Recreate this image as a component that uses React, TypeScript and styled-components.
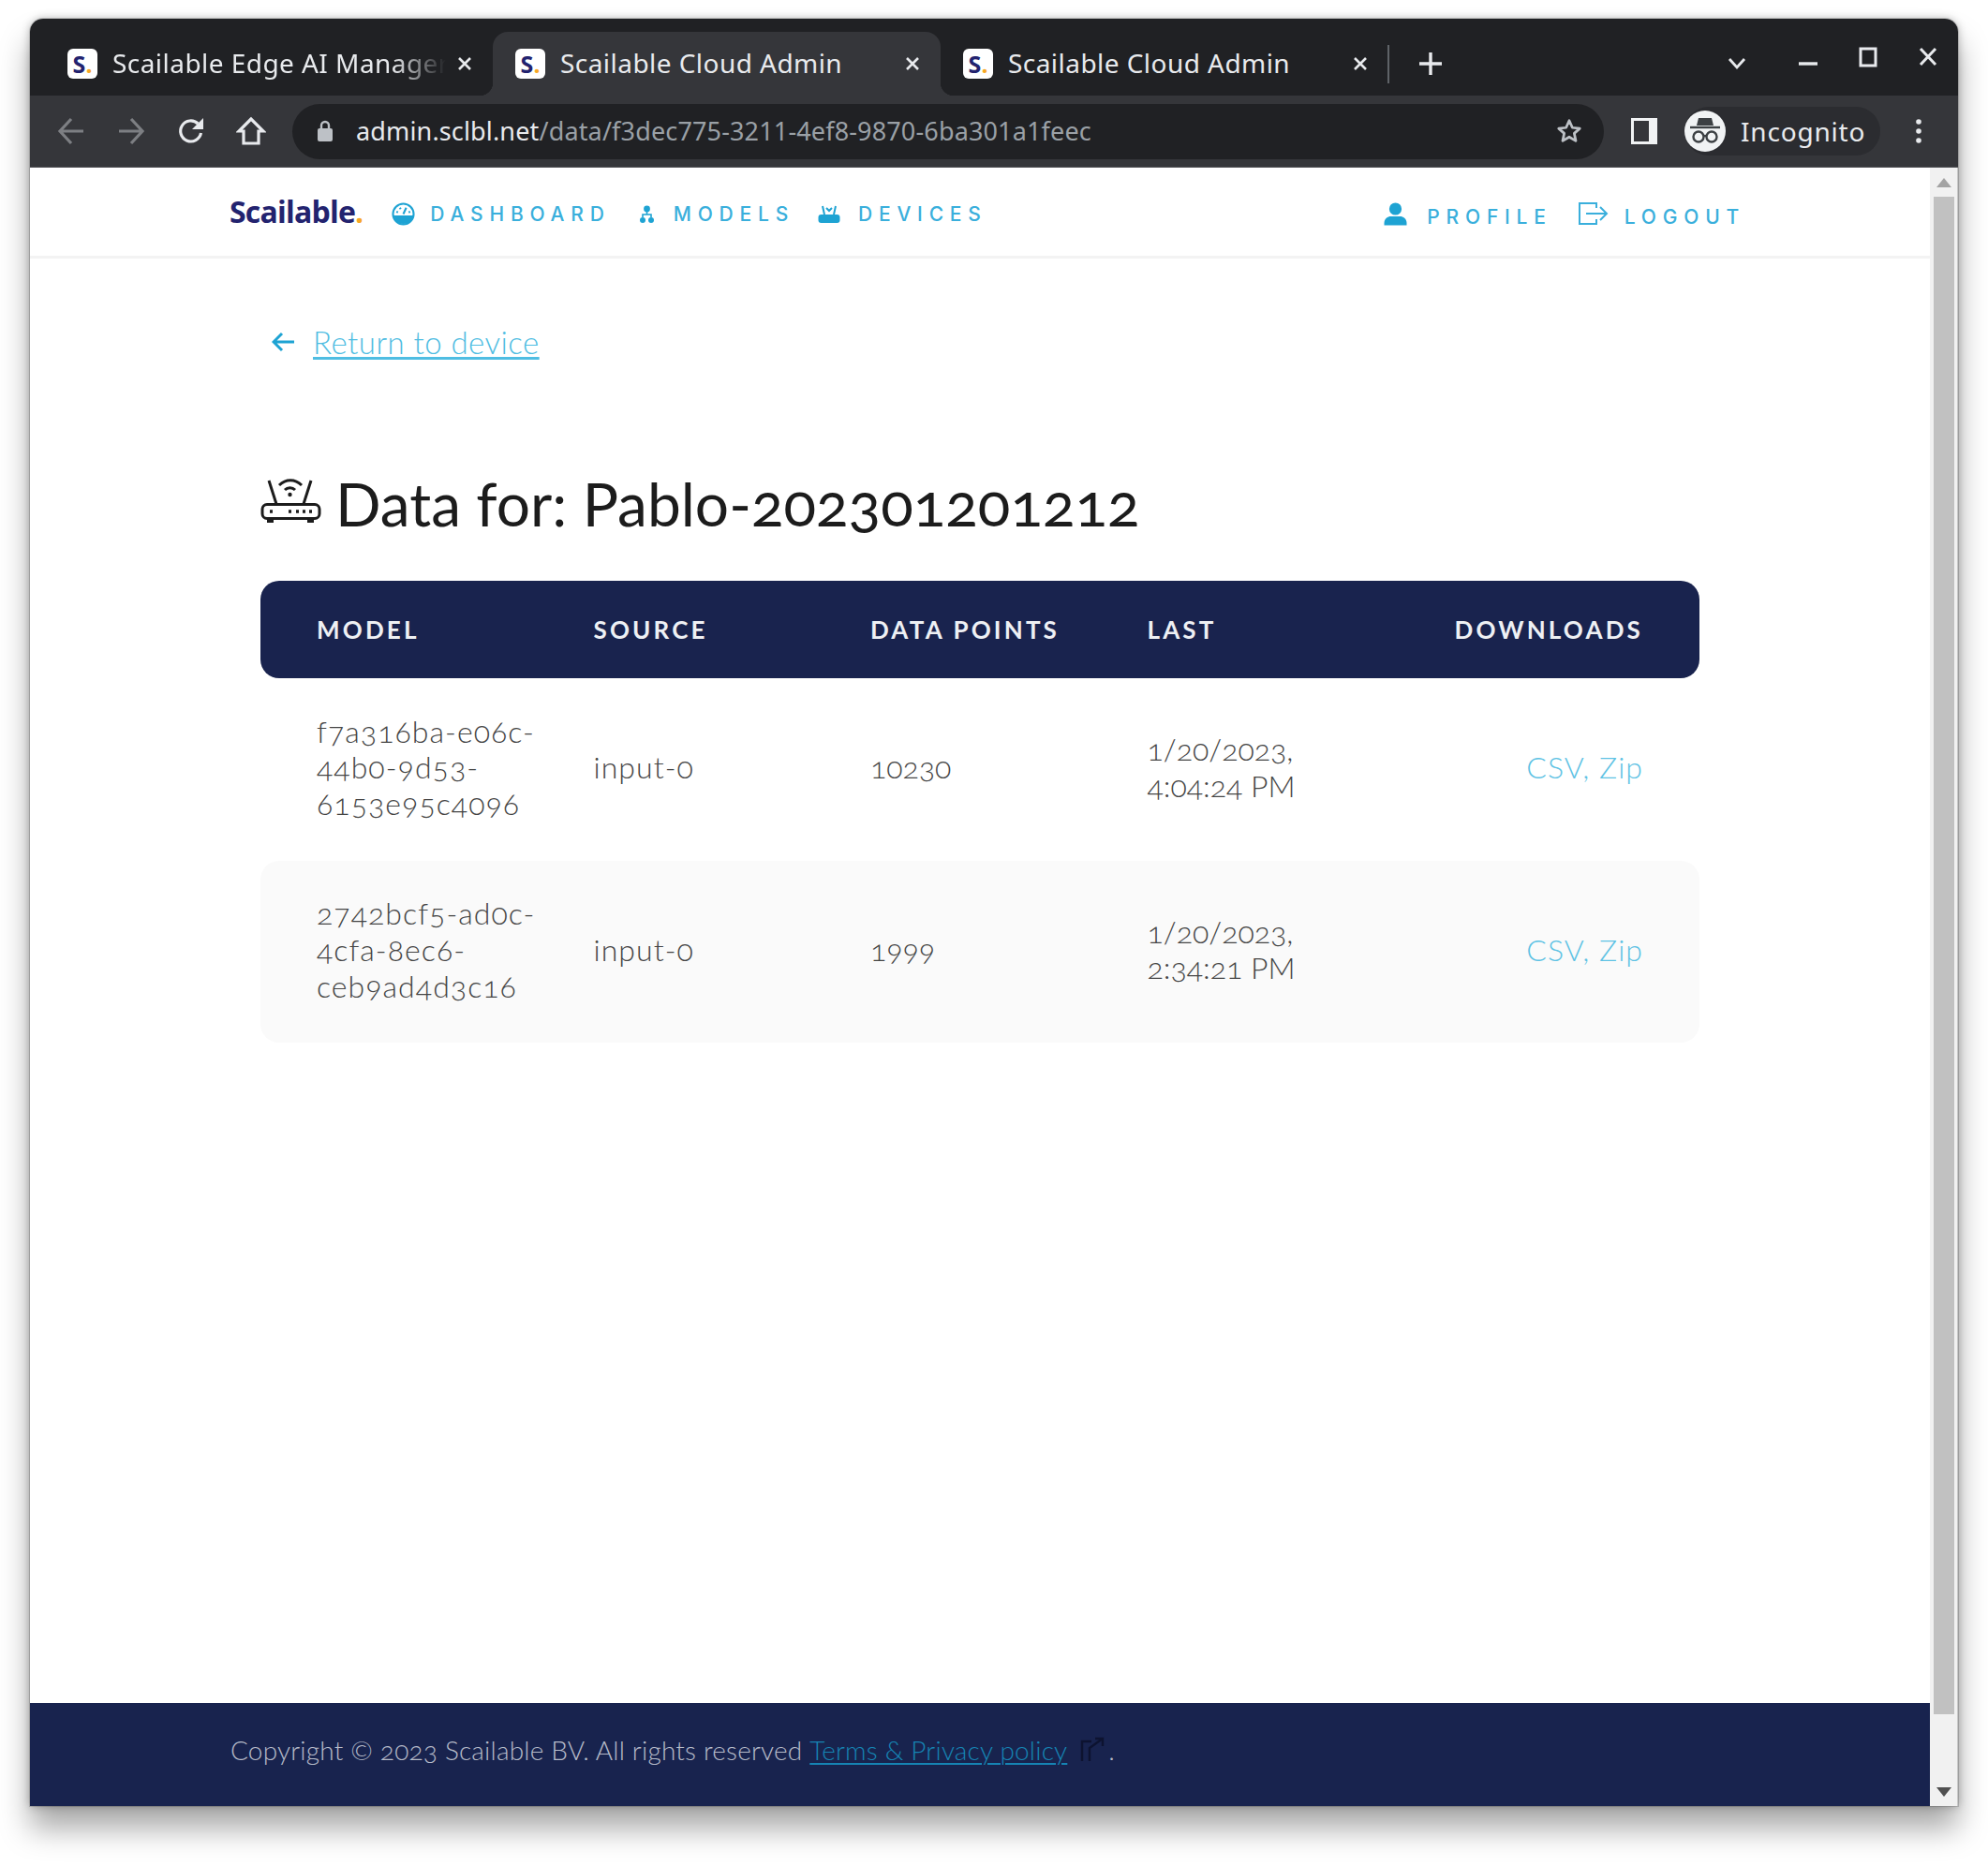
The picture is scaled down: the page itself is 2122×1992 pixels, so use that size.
import React from "react";
import styled, { createGlobalStyle } from "styled-components";

const BODY = `Lato, "Open Sans", sans-serif`;
const CHROME = `"Noto Sans", "Open Sans", sans-serif`;
const NAV = `Inter, "Open Sans", sans-serif`;
const NAVY = "#19234e";

const Global = createGlobalStyle`
  html, body { margin: 0; padding: 0; background: #fff; }
  * { box-sizing: border-box; }
`;

const Desktop = styled.div`
  width: 2122px;
  height: 1992px;
  padding: 20px 32px 64px;
  background: #fff;
  overflow: hidden;
`;
const Window = styled.div`
  width: 2058px;
  height: 1908px;
  display: flex;
  flex-direction: column;
  border-radius: 14px 14px 0 0;
  background: #fff;
  box-shadow: 0 24px 32px rgba(0,0,0,.34), 0 0 10px rgba(0,0,0,.28), 0 0 0 1px rgba(0,0,0,.14);
`;
const TabStrip = styled.div`
  height: 82px;
  flex: none;
  display: flex;
  align-items: flex-end;
  padding-left: 16px;
  background: #202124;
  border-radius: 14px 14px 0 0;
`;
const Tab = styled.div<{ $active?: boolean }>`
  position: relative;
  width: 478px;
  height: 68px;
  flex: none;
  display: flex;
  align-items: center;
  padding: 0 22px 0 24px;
  background: ${(p) => (p.$active ? "#35363a" : "transparent")};
  border-radius: 16px 16px 0 0;
  ${(p) =>
    p.$active
      ? `
    &::before, &::after {
      content: "";
      position: absolute;
      bottom: 0;
      width: 14px;
      height: 14px;
    }
    &::before { left: -14px; background: radial-gradient(circle at 0 0, #202124 14px, #35363a 14.5px); }
    &::after { right: -14px; background: radial-gradient(circle at 100% 0, #202124 14px, #35363a 14.5px); }
  `
      : ""}
`;
const Favicon = styled.div`
  width: 32px;
  height: 32px;
  flex: none;
  display: flex;
  align-items: center;
  justify-content: center;
  background: #fff;
  border-radius: 6px;
  font: 700 25px/32px ${CHROME};
  color: #23236f;
  span { color: #f7a823; }
`;
const TabTitle = styled.div<{ $fade?: boolean }>`
  flex: 1;
  margin: -2px 0 0 16px;
  overflow: hidden;
  white-space: nowrap;
  font: 400 28px/36px ${CHROME};
  letter-spacing: 0.45px;
  color: #e8eaed;
  ${(p) => (p.$fade ? "mask-image: linear-gradient(90deg,#000 84%,transparent 100%);" : "")}
`;
const TabClose = styled.svg`
  width: 16px;
  height: 16px;
  flex: none;
  margin-left: 12px;
  stroke: #e8eaed;
  stroke-width: 2.6;
`;
const TabDivider = styled.div`
  width: 2px;
  height: 41px;
  margin: 0 0 13px -1px;
  flex: none;
  background: #5f6368;
`;
const StripButton = styled.div<{ $w?: number }>`
  width: ${(p) => p.$w ?? 64}px;
  height: 68px;
  flex: none;
  display: flex;
  align-items: center;
  justify-content: center;
`;
const NewTab = styled(StripButton)`
  margin-left: 12px;
`;
const WindowControls = styled.div`
  margin-left: auto;
  display: flex;
  align-items: flex-end;
`;
const ChevronSlot = styled(StripButton)`
  margin-right: 12px;
`;
const Toolbar = styled.div`
  height: 77px;
  flex: none;
  display: flex;
  align-items: center;
  padding-left: 12px;
  background: #35363a;
  border-bottom: 1px solid #55565a;
`;
const ToolButton = styled.div`
  width: 64px;
  height: 64px;
  flex: none;
  display: flex;
  align-items: center;
  justify-content: center;
`;
const AddressBar = styled.div`
  width: 1400px;
  height: 59px;
  margin-left: 12px;
  flex: none;
  display: flex;
  align-items: center;
  padding: 0 22px 0 26px;
  background: #202124;
  border-radius: 30px;
`;
const Url = styled.div`
  flex: 1;
  margin-left: 24px;
  font: 400 27px/36px ${CHROME};
  letter-spacing: 0.15px;
  color: #9aa0a6;
  white-space: nowrap;
  b { font-weight: 400; color: #e8eaed; }
`;
const PanelSlot = styled(ToolButton)`
  margin-left: 11px;
`;
const Profile = styled.div`
  width: 209px;
  height: 52px;
  margin-left: 11px;
  flex: none;
  display: flex;
  align-items: center;
  border-radius: 26px;
  background: #2b2c30;
  font: 400 28px/36px ${CHROME};
  letter-spacing: 0.8px;
  color: #e8eaed;
`;
const Avatar = styled.div`
  width: 44px;
  height: 44px;
  margin-right: 16px;
  flex: none;
  border-radius: 50%;
  background: #f1f3f4;
  display: flex;
  align-items: center;
  justify-content: center;
`;
const MenuSlot = styled(ToolButton)`
  margin-left: 9px;
`;
const Viewport = styled.div`
  flex: 1;
  min-height: 0;
  display: flex;
`;
const Page = styled.div`
  flex: 1;
  min-width: 0;
  display: flex;
  flex-direction: column;
`;
const Nav = styled.div`
  height: 97px;
  flex: none;
  display: flex;
  justify-content: space-between;
  padding: 0 197px 0 213px;
  border-bottom: 3px solid #f3f3f3;
`;
const NavGroup = styled.div<{ $shift?: number }>`
  display: flex;
  align-items: center;
  padding-top: ${(p) => p.$shift ?? 0}px;
`;
const Logo = styled.div`
  font: 700 32px/40px "Open Sans", sans-serif;
  letter-spacing: -0.8px;
  color: #23236f;
  margin-right: 31px;
  margin-top: -6px;
  span { color: #f7a823; }
`;
const NavLink = styled.a<{ $gap: number; $iconGap?: number; $raise?: number }>`
  display: flex;
  align-items: center;
  gap: ${(p) => p.$iconGap ?? 16}px;
  margin-right: ${(p) => p.$gap}px;
  font: 500 21px/28px ${NAV};
  letter-spacing: 6.8px;
  color: #3aafdc;
  white-space: nowrap;
  svg { margin-top: ${(p) => -(p.$raise ?? 0)}px; }
  &:last-child { margin-right: 0; }
`;
const Main = styled.div`
  flex: 1;
  padding: 69px 0 0 246px;
`;
const BackRow = styled.div`
  display: flex;
  align-items: center;
  gap: 20px;
  margin-left: 12px;
  height: 40px;
`;
const BackLink = styled.a`
  font: 300 33px/40px ${BODY};
  letter-spacing: 0.45px;
  color: #4fbde2;
  text-decoration: underline;
  text-decoration-thickness: 3px;
  text-underline-offset: 3px;
`;
const Title = styled.h1`
  margin: 113px 0 0;
  height: 80px;
  display: flex;
  align-items: center;
  gap: 15px;
  font: 400 64px/80px ${BODY};
  color: #1c1c1c;
  font-variant-numeric: oldstyle-nums;
`;
const TitleIcon = styled.svg`
  width: 65px;
  height: 50px;
  flex: none;
  margin-top: -9px;
`;
const Table = styled.div`
  width: 1536px;
  margin-top: 42px;
`;
const Row = styled.div<{ $shaded?: boolean }>`
  display: grid;
  grid-template-columns: 295.5px 295.5px 295.5px 295.5px 354px;
  align-items: center;
  height: 194.5px;
  padding-bottom: 3px;
  border-radius: 20px;
  background: ${(p) => (p.$shaded ? "#fafafa" : "transparent")};
  font: 300 32px/38.6px ${BODY};
  color: #454545;
  font-variant-numeric: oldstyle-nums;
`;
const HeadRow = styled(Row)`
  height: 104px;
  padding-bottom: 0;
  background: ${NAVY};
  font: 700 26px/30px ${BODY};
  letter-spacing: 3.15px;
  color: #eef0f4;
`;
const Cell = styled.div<{ $right?: boolean; $wide?: boolean }>`
  padding: 0 ${(p) => (p.$right ? 60 : 0)}px 0 60px;
  text-align: ${(p) => (p.$right ? "right" : "left")};
  white-space: nowrap;
  ${(p) => (p.$wide ? "letter-spacing: 1.05px;" : "")}
`;
const FileLink = styled.span`
  color: #5ec2e4;
`;
const Footer = styled.div`
  height: 110px;
  flex: none;
  display: flex;
  align-items: center;
  padding: 0 0 10px 214px;
  background: #18234e;
  font: 300 28px/34px ${BODY};
  letter-spacing: 0.2px;
  color: #b6bbc9;
  white-space: pre;
  font-variant-numeric: oldstyle-nums;
`;
const PolicyLink = styled.a`
  color: #1683b3;
  text-decoration: underline;
  text-decoration-thickness: 2px;
  text-underline-offset: 3px;
`;
const ExternalIcon = styled.svg`
  width: 28px;
  height: 28px;
  margin: 0 2px 0 14px;
  flex: none;
`;
const Scrollbar = styled.div`
  width: 30px;
  flex: none;
  display: flex;
  flex-direction: column;
  align-items: center;
  background: #f1f1f1;
  border-right: 1px solid #c9c9c9;
`;
const ScrollArrow = styled.div`
  width: 30px;
  height: 31px;
  flex: none;
  display: flex;
  align-items: center;
  justify-content: center;
`;
const ScrollArrowEnd = styled(ScrollArrow)`
  margin-top: auto;
`;
const ScrollThumb = styled.div`
  width: 22px;
  height: 1620px;
  flex: none;
  background: #c1c1c1;
`;

const Fav = () => (
  <Favicon>
    S<span>.</span>
  </Favicon>
);

const CloseGlyph = () => (
  <TabClose viewBox="0 0 16 16">
    <path d="M2 2l12 12M14 2L2 14" fill="none" />
  </TabClose>
);

const ArrowGlyph = ({ flip, color, size = 30 }: { flip?: boolean; color: string; size?: number }) => (
  <svg width={size} height={size} viewBox="0 0 30 30" style={flip ? { transform: "scaleX(-1)" } : undefined}>
    <path d="M15 2L3 15l12 13M3 15h25" fill="none" stroke={color} strokeWidth="3.2" />
  </svg>
);

const rows = [
  { lines: ["f7a316ba-e06c-", "44b0-9d53-", "6153e95c4096"], points: "10230", date: "1/20/2023,", time: "4:04:24 PM" },
  { lines: ["2742bcf5-ad0c-", "4cfa-8ec6-", "ceb9ad4d3c16"], points: "1999", date: "1/20/2023,", time: "2:34:21 PM" },
];

export default function App() {
  return (
    <Desktop>
      <Global />
      <Window>
        <TabStrip>
          <Tab>
            <Fav />
            <TabTitle $fade>Scailable Edge AI Manager</TabTitle>
            <CloseGlyph />
          </Tab>
          <Tab $active>
            <Fav />
            <TabTitle>Scailable Cloud Admin</TabTitle>
            <CloseGlyph />
          </Tab>
          <Tab>
            <Fav />
            <TabTitle>Scailable Cloud Admin</TabTitle>
            <CloseGlyph />
          </Tab>
          <TabDivider />
          <NewTab>
            <svg width="26" height="26" viewBox="0 0 26 26">
              <path d="M13 1v24M1 13h24" stroke="#e8eaed" strokeWidth="3.4" />
            </svg>
          </NewTab>
          <WindowControls>
            <ChevronSlot>
              <svg width="20" height="14" viewBox="0 0 20 14">
                <path d="M2 2l8 9 8-9" fill="none" stroke="#e8eaed" strokeWidth="2.8" />
              </svg>
            </ChevronSlot>
            <StripButton>
              <svg width="22" height="6" viewBox="0 0 22 6">
                <path d="M1 3h20" stroke="#e8eaed" strokeWidth="3.4" />
              </svg>
            </StripButton>
            <StripButton>
              <svg width="20" height="36" viewBox="0 0 20 36">
                <path d="M2 2h16v18H2z" fill="none" stroke="#e8eaed" strokeWidth="3" />
              </svg>
            </StripButton>
            <StripButton>
              <svg width="20" height="36" viewBox="0 0 20 36">
                <path d="M2 2l16 17M18 2L2 19" fill="none" stroke="#e8eaed" strokeWidth="3" />
              </svg>
            </StripButton>
          </WindowControls>
        </TabStrip>
        <Toolbar>
          <ToolButton>
            <ArrowGlyph color="#7d7f83" />
          </ToolButton>
          <ToolButton>
            <ArrowGlyph flip color="#7d7f83" />
          </ToolButton>
          <ToolButton>
            <svg width="30" height="30" viewBox="0 0 30 30">
              <path d="M25.5 17a11 11 0 1 1-3.2-10" fill="none" stroke="#e8eaed" strokeWidth="3.2" />
              <path d="M28 1v12H16z" fill="#e8eaed" />
            </svg>
          </ToolButton>
          <ToolButton>
            <svg width="32" height="32" viewBox="0 0 32 32">
              <path d="M16 3L3 16h5v13h16V16h5z" fill="none" stroke="#e8eaed" strokeWidth="3.2" />
            </svg>
          </ToolButton>
          <AddressBar>
            <svg width="18" height="24" viewBox="0 0 18 24">
              <rect x="1" y="9" width="16" height="14" rx="2" fill="#bdc1c6" />
              <path d="M5 9V6a4 4 0 0 1 8 0v3" fill="none" stroke="#bdc1c6" strokeWidth="2.4" />
            </svg>
            <Url>
              <b>admin.sclbl.net</b>/data/f3dec775-3211-4ef8-9870-6ba301a1feec
            </Url>
            <svg width="30" height="30" viewBox="0 0 24 24">
              <path d="M12 3l2.7 6 6.3.7-4.7 4.2 1.3 6.4L12 17l-5.6 3.3 1.3-6.4L3 9.7 9.3 9z" fill="none" stroke="#bdc1c6" strokeWidth="2.2" strokeLinejoin="round" />
            </svg>
          </AddressBar>
          <PanelSlot>
            <svg width="28" height="28" viewBox="0 0 28 28">
              <rect x="0" y="0" width="28" height="28" fill="#f1f3f4" />
              <rect x="3" y="3" width="16" height="22" fill="#35363a" />
            </svg>
          </PanelSlot>
          <Profile>
            <Avatar>
              <svg width="34" height="32" viewBox="0 0 34 32">
                <path d="M10 2h14l2 8H8z" fill="#3c4043" />
                <path d="M1 12h32" stroke="#3c4043" strokeWidth="2.4" />
                <circle cx="10" cy="22" r="5.5" fill="none" stroke="#3c4043" strokeWidth="2.4" />
                <circle cx="24" cy="22" r="5.5" fill="none" stroke="#3c4043" strokeWidth="2.4" />
                <path d="M15.5 21h3" stroke="#3c4043" strokeWidth="2.4" />
              </svg>
            </Avatar>
            Incognito
          </Profile>
          <MenuSlot>
            <svg width="8" height="28" viewBox="0 0 8 28">
              <circle cx="4" cy="4" r="2.8" fill="#e8eaed" />
              <circle cx="4" cy="14" r="2.8" fill="#e8eaed" />
              <circle cx="4" cy="24" r="2.8" fill="#e8eaed" />
            </svg>
          </MenuSlot>
        </Toolbar>
        <Viewport>
          <Page>
            <Nav>
              <NavGroup $shift={5}>
                <Logo>
                  Scailable<span>.</span>
                </Logo>
                <NavLink $gap={31}>
                  <svg width="25" height="25" viewBox="0 0 24 24">
                    <circle cx="12" cy="12" r="10.6" fill="none" stroke="#1ea3d3" strokeWidth="2" />
                    <path d="M1.6 13.5h20.8A10.6 10.6 0 0 1 1.6 13.5z" fill="#1ea3d3" />
                    <path d="M12 12l3-6.5M5 9.5l1.5.8M8.5 5.5l.8 1.5M19 9.5l-1.5.8" stroke="#1ea3d3" strokeWidth="2" />
                  </svg>
                  DASHBOARD
                </NavLink>
                <NavLink $gap={25} $iconGap={21}>
                  <svg width="15" height="20" viewBox="0 0 15 20">
                    <circle cx="7.5" cy="4" r="3.4" fill="#1ea3d3" />
                    <circle cx="3" cy="16" r="3" fill="#1ea3d3" />
                    <circle cx="12" cy="16" r="3" fill="#1ea3d3" />
                    <path d="M7.5 6v4M3 13v-3h9v3" fill="none" stroke="#1ea3d3" strokeWidth="1.6" />
                  </svg>
                  MODELS
                </NavLink>
                <NavLink $gap={0} $iconGap={19}>
                  <svg width="24" height="20" viewBox="0 0 24 20">
                    <rect x="0.5" y="10" width="23" height="9" rx="3" fill="#1ea3d3" />
                    <path d="M5 1l2 9M19 1l-2 9M9 3l3 3 3-3" fill="none" stroke="#1ea3d3" strokeWidth="2" />
                  </svg>
                  DEVICES
                </NavLink>
              </NavGroup>
              <NavGroup $shift={12}>
                <NavLink $gap={27} $iconGap={21} $raise={8}>
                  <svg width="25" height="25" viewBox="0 0 25 25">
                    <circle cx="12.5" cy="7" r="6.6" fill="#1ea3d3" />
                    <path d="M0.5 24.5v-2.5c0-4.5 4-7 7-7h10c3 0 7 2.5 7 7v2.5z" fill="#1ea3d3" />
                  </svg>
                  PROFILE
                </NavLink>
                <NavLink $gap={0} $iconGap={17} $raise={8}>
                  <svg width="33" height="26" viewBox="0 0 33 26">
                    <path d="M20 7V2H2v22h18v-5M9 13h22M24 6l7 7-7 7" fill="none" stroke="#3aafdc" strokeWidth="2" />
                  </svg>
                  LOGOUT
                </NavLink>
              </NavGroup>
            </Nav>
            <Main>
              <BackRow>
                <svg width="24" height="22" viewBox="0 0 24 22">
                  <path d="M11 2L2 11l9 9M2 11h22" fill="none" stroke="#1ea3d3" strokeWidth="3" />
                </svg>
                <BackLink>Return to device</BackLink>
              </BackRow>
              <Title>
                <TitleIcon viewBox="0 0 65 50">
                  <rect x="2" y="29.5" width="61" height="15" rx="5" fill="none" stroke="#1c1c1c" strokeWidth="3" />
                  <path d="M9 4l8 25M54 4l-8 25" stroke="#1c1c1c" strokeWidth="3" fill="none" />
                  <path d="M20 9c7-7 17-7 24 0M26 14c3-3 8-3 11 0" fill="none" stroke="#1c1c1c" strokeWidth="3" />
                  <circle cx="31.5" cy="19" r="2.2" fill="#1c1c1c" />
                  <path d="M10 37h3M30 37h3M38 37h3M45 37h3M52 37h3" stroke="#1c1c1c" strokeWidth="3.4" />
                  <path d="M7 47.5h7M50 47.5h7" stroke="#1c1c1c" strokeWidth="3" />
                </TitleIcon>
                Data for: Pablo-202301201212
              </Title>
              <Table>
                <HeadRow>
                  <Cell>MODEL</Cell>
                  <Cell>SOURCE</Cell>
                  <Cell>DATA POINTS</Cell>
                  <Cell>LAST</Cell>
                  <Cell $right>DOWNLOADS</Cell>
                </HeadRow>
                {rows.map((r, i) => (
                  <Row key={r.lines[0]} $shaded={i === 1}>
                    <Cell $wide>
                      {r.lines.map((l) => (
                        <div key={l}>{l}</div>
                      ))}
                    </Cell>
                    <Cell $wide>input-0</Cell>
                    <Cell>{r.points}</Cell>
                    <Cell>
                      {r.date}
                      <br />
                      {r.time}
                    </Cell>
                    <Cell $right $wide>
                      <FileLink>CSV, Zip</FileLink>
                    </Cell>
                  </Row>
                ))}
              </Table>
            </Main>
            <Footer>
              Copyright © 2023 Scailable BV. All rights reserved <PolicyLink>Terms &amp; Privacy policy</PolicyLink>
              <ExternalIcon viewBox="0 0 28 28">
                <path d="M12 5H2v21M10 26V12L24 2M16 2h8v8" fill="none" stroke="#0d1330" strokeWidth="2.4" />
              </ExternalIcon>
              .
            </Footer>
          </Page>
          <Scrollbar>
            <ScrollArrow>
              <svg width="16" height="10" viewBox="0 0 16 10">
                <path d="M8 0l8 10H0z" fill="#a3a3a3" />
              </svg>
            </ScrollArrow>
            <ScrollThumb />
            <ScrollArrowEnd>
              <svg width="16" height="10" viewBox="0 0 16 10">
                <path d="M0 0h16L8 10z" fill="#505050" />
              </svg>
            </ScrollArrowEnd>
          </Scrollbar>
        </Viewport>
      </Window>
    </Desktop>
  );
}
